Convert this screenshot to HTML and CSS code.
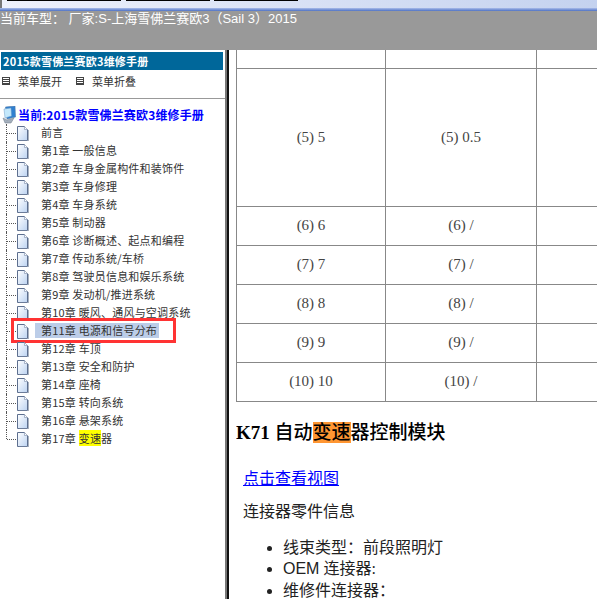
FILE: index.html
```html
<!DOCTYPE html>
<html lang="zh">
<head>
<meta charset="utf-8">
<title>维修手册</title>
<link rel="stylesheet" href="styles.css">
</head>
<body>
<div class="strip">
  <div class="strip-tabs">
    <span class="tab tab-a"></span><span class="tab tab-b"></span><span class="tab tab-c"></span>
  </div>
  <div class="strip-line"></div>
</div>
<header class="banner">当前车型： 厂家:S-上海雪佛兰赛欧3（Sail 3）2015</header>
<main class="main">
  <aside class="side">
    <h1 class="side-title">2015款雪佛兰赛欧3维修手册</h1>
    <div class="menu">
      <span class="menu-item"><i class="menu-icon"></i>菜单展开</span>
      <span class="menu-item"><i class="menu-icon"></i>菜单折叠</span>
    </div>
    <div class="rule"></div>
    <div class="root">
      <svg class="root-icon" width="14" height="18" viewBox="0 0 14 18">
        <path d="M3.5 1 L13 0 L13.5 11 L5 13 Z" fill="#2f7fd0" stroke="#4f78a8" stroke-width=".6"/>
        <path d="M2 3 L9 2 L9.5 10 L3 12 Z" fill="#c4e8fb" stroke="#6f9cc8" stroke-width=".5"/>
        <path d="M1 12 L5 14 L12 12 L9 17 L3 17 Z" fill="#a4afbc" stroke="#6c7b8a" stroke-width=".5"/>
      </svg>
      <span>当前:2015款雪佛兰赛欧3维修手册</span>
    </div>
    <ul class="tree">
      <li class="row"><i class="link"></i><svg class="doc" viewBox="0 0 13 15"><use href="#d"/></svg><span class="label">前言</span></li>
      <li class="row"><i class="link"></i><svg class="doc" viewBox="0 0 13 15"><use href="#d"/></svg><span class="label">第1章 一般信息</span></li>
      <li class="row"><i class="link"></i><svg class="doc" viewBox="0 0 13 15"><use href="#d"/></svg><span class="label">第2章 车身金属构件和装饰件</span></li>
      <li class="row"><i class="link"></i><svg class="doc" viewBox="0 0 13 15"><use href="#d"/></svg><span class="label">第3章 车身修理</span></li>
      <li class="row"><i class="link"></i><svg class="doc" viewBox="0 0 13 15"><use href="#d"/></svg><span class="label">第4章 车身系统</span></li>
      <li class="row"><i class="link"></i><svg class="doc" viewBox="0 0 13 15"><use href="#d"/></svg><span class="label">第5章 制动器</span></li>
      <li class="row"><i class="link"></i><svg class="doc" viewBox="0 0 13 15"><use href="#d"/></svg><span class="label">第6章 诊断概述、起点和编程</span></li>
      <li class="row"><i class="link"></i><svg class="doc" viewBox="0 0 13 15"><use href="#d"/></svg><span class="label">第7章 传动系统/车桥</span></li>
      <li class="row"><i class="link"></i><svg class="doc" viewBox="0 0 13 15"><use href="#d"/></svg><span class="label">第8章 驾驶员信息和娱乐系统</span></li>
      <li class="row"><i class="link"></i><svg class="doc" viewBox="0 0 13 15"><use href="#d"/></svg><span class="label">第9章 发动机/推进系统</span></li>
      <li class="row"><i class="link"></i><svg class="doc" viewBox="0 0 13 15"><use href="#d"/></svg><span class="label">第10章 暖风、通风与空调系统</span></li>
      <li class="row row-active"><i class="link"></i><svg class="doc" viewBox="0 0 13 15"><use href="#d"/></svg><span class="label label-active">第11章 电源和信号分布</span><i class="callout"></i></li>
      <li class="row"><i class="link"></i><svg class="doc" viewBox="0 0 13 15"><use href="#d"/></svg><span class="label">第12章 车顶</span></li>
      <li class="row"><i class="link"></i><svg class="doc" viewBox="0 0 13 15"><use href="#d"/></svg><span class="label">第13章 安全和防护</span></li>
      <li class="row"><i class="link"></i><svg class="doc" viewBox="0 0 13 15"><use href="#d"/></svg><span class="label">第14章 座椅</span></li>
      <li class="row"><i class="link"></i><svg class="doc" viewBox="0 0 13 15"><use href="#d"/></svg><span class="label">第15章 转向系统</span></li>
      <li class="row"><i class="link"></i><svg class="doc" viewBox="0 0 13 15"><use href="#d"/></svg><span class="label">第16章 悬架系统</span></li>
      <li class="row row-last"><i class="link"></i><svg class="doc" viewBox="0 0 13 15"><use href="#d"/></svg><span class="label">第17章 <mark class="hit-yellow">变速</mark>器</span></li>
    </ul>
  </aside>
  <div class="splitter"></div>
  <section class="content">
    <table class="spec">
      <tr class="r-top"><td class="c1"></td><td class="c2"></td><td class="c3"></td></tr>
      <tr class="r-tall"><td>(5) 5</td><td>(5) 0.5</td><td></td></tr>
      <tr><td>(6) 6</td><td>(6) /</td><td></td></tr>
      <tr><td>(7) 7</td><td>(7) /</td><td></td></tr>
      <tr><td>(8) 8</td><td>(8) /</td><td></td></tr>
      <tr><td>(9) 9</td><td>(9) /</td><td></td></tr>
      <tr><td>(10) 10</td><td>(10) /</td><td></td></tr>
    </table>
    <h2 class="module">K71 <span class="module-cjk">自动<mark class="hit-orange">变速</mark>器控制模块</span></h2>
    <p class="para para-link"><a href="#view">点击查看视图</a></p>
    <p class="para para-info">连接器零件信息</p>
    <ul class="facts">
      <li>线束类型：前段照明灯</li>
      <li><span class="latin">OEM</span> 连接器:</li>
      <li>维修件连接器：</li>
    </ul>
  </section>
</main>
<svg class="defs" width="0" height="0" aria-hidden="true">
  <defs>
    <linearGradient id="g" x1="0" y1="0" x2="1" y2="1">
      <stop offset="0" stop-color="#ffffff"/><stop offset="1" stop-color="#bcd3f2"/>
    </linearGradient>
    <g id="d">
      <path d="M1.5 .5 H8.5 L11.5 3.5 V14.5 H1.5 Z" fill="url(#g)" stroke="#5d6f8f"/>
      <path d="M12.5 4 V15 M3 15.3 H12.5" stroke="#a9b2c0" fill="none"/>
      <path d="M8.5 .5 V3.5 H11.5" fill="#fff" stroke="#8a9ab5" stroke-width=".7"/>
    </g>
  </defs>
</svg>
</body>
</html>
```

FILE: styles.css
```css
html, body { margin: 0; padding: 0; height: 100%; overflow: hidden; background: #fff; }
body { display: flex; flex-direction: column; font-family: "Liberation Serif", "Noto Sans CJK SC", serif; }

.strip { height: 11px; flex: none; display: flex; flex-direction: column; background: linear-gradient(90deg, #eef1fb, #c4d2ef); }
.strip-tabs { height: 8px; display: flex; box-sizing: border-box; border-left: 2px solid #777; }
.tab { display: block; height: 1px; background: #000; }
.tab-a { margin-left: 5px; width: 114px; }
.tab-b { margin-left: 5px; width: 84px; }
.tab-c { margin-left: 4px; width: 84px; }
.strip-line { height: 3px; background: linear-gradient(#a9bcea, #4f72c4); }

.banner { height: 39px; flex: none; box-sizing: border-box; background: #999; color: #fff; font: 13px/16px "Liberation Sans", "Noto Sans CJK SC", sans-serif; white-space: pre; }

.main { flex: 1; display: flex; min-height: 0; }

.side { width: 225px; flex: none; box-sizing: border-box; padding-top: 2px; overflow: hidden; font: 11px/18px "Noto Sans CJK SC", "Liberation Sans", sans-serif; color: #333; }
.side-title { margin: 0 2px 0 1px; height: 18px; background: #00679a; color: #fff; font: bold 11px/18px "Noto Sans CJK SC", sans-serif; padding-left: 2px; letter-spacing: .2px; }
.menu { display: flex; gap: 14px; margin-top: 2px; height: 18px; padding-left: 2px; }
.menu-item { display: flex; align-items: center; gap: 8px; }
.menu-icon { width: 8px; height: 8px; box-sizing: border-box; border: 1px solid #444; background: repeating-linear-gradient(#fff 0 1px, #444 1px 2px); }
.rule { height: 1px; background: #999; margin-top: 8px; }

.root { display: flex; align-items: center; gap: 2px; height: 18px; margin-top: 7px; padding-left: 2px; color: #00f; font-size: 12px; font-weight: bold; letter-spacing: .15px; }
.root-icon { flex: none; }

.tree { list-style: none; margin: 0 0 0 6px; padding: 0; }
.row { position: relative; display: flex; align-items: center; height: 18px; border-left: 1px dotted #555; }
.row-last { border-left-color: transparent; }
.row-last::before { content: ""; position: absolute; left: -1px; top: 0; height: 9px; border-left: 1px dotted #555; }
.link { width: 9px; flex: none; border-top: 1px dotted #555; }
.doc { width: 13px; height: 15px; flex: none; }
.label { margin-left: 12px; position: relative; top: -1px; line-height: 15px; white-space: nowrap; letter-spacing: .2px; }
.label-active { background: #bccde8; margin-left: 6px; padding: 0 2px 0 6px; }
.callout { position: absolute; left: 4px; top: -4px; width: 165px; height: 25px; box-sizing: border-box; border: 3px solid #f33; }
.hit-yellow { background: #ff0; color: #333; }

.splitter { width: 4px; flex: none; margin-right: 7px; background: linear-gradient(90deg, #777 0 2px, #111 2px 4px); }

.content { flex: 1; min-width: 0; overflow: hidden; color: #222; font-size: 16px; }
.spec { border-collapse: collapse; table-layout: fixed; width: 450px; color: #444; font-size: 15px; }
.spec td { border: 1px solid #888; text-align: center; padding: 0; height: 39px; box-sizing: border-box; }
.spec .c1 { width: 149px; }
.spec .c2 { width: 151px; }
.spec .c3 { width: 150px; }
.spec tr.r-top td { height: 18px; border-top: 0; }
.spec tr.r-tall td { height: 138px; padding-top: 1px; }

.module { margin: 19px 0 0; font-size: 19px; line-height: 24px; font-weight: bold; color: #000; }
.module-cjk { font-weight: 500; }
.hit-orange { background: #ff9632; color: inherit; }
.para { margin: 16px 0 0 7px; line-height: 22px; }
.para-link { margin-top: 23px; }
.para-info { margin-top: 11px; }
.para a { color: #00f; }
.facts { margin: 14px 0 0; padding-left: 47px; line-height: 21.5px; }
.latin { font-family: "Liberation Sans", sans-serif; }
.defs { position: absolute; }
```
